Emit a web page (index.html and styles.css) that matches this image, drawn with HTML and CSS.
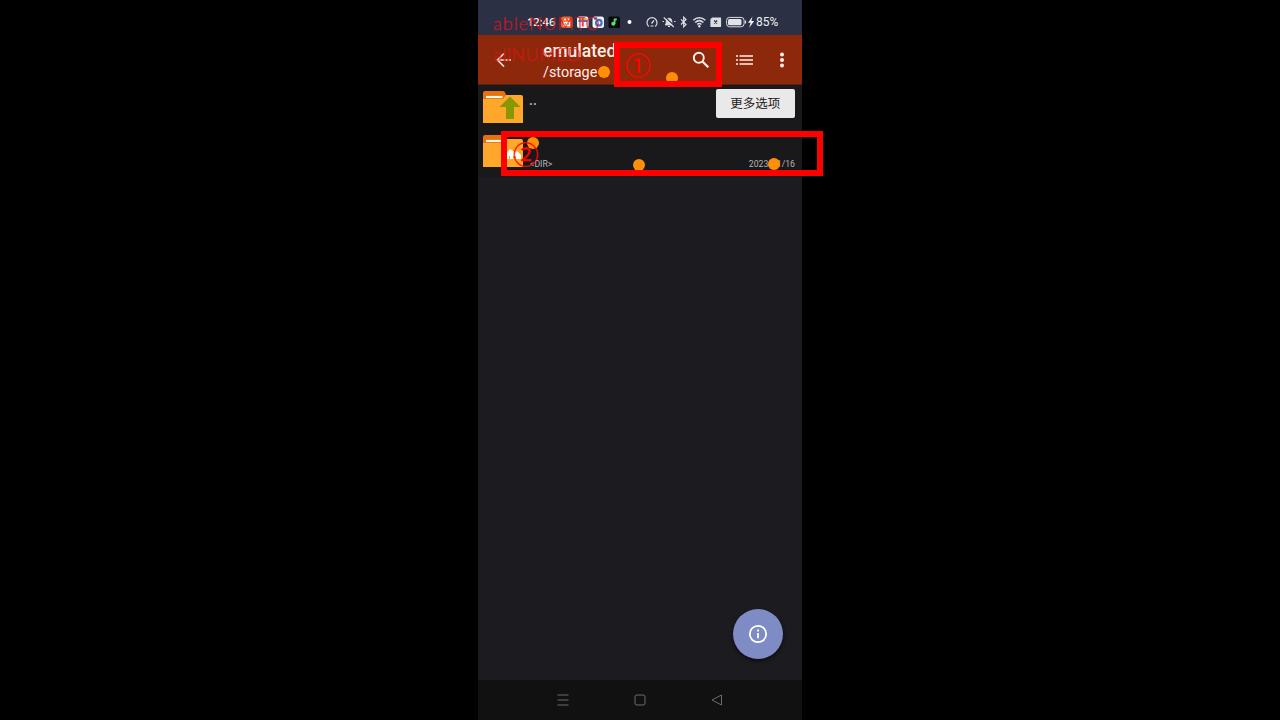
FILE: index.html
```html
<!DOCTYPE html>
<html lang="zh">
<head>
<meta charset="utf-8">
<title>emulated</title>
<link rel="stylesheet" href="styles.css">
</head>
<body>
<div class="phone">
  <header class="status">
    <span class="clock">12:46</span>
    <svg class="apps" width="80" height="14" viewBox="0 0 80 14">
      <rect x="1" y="1.500" width="11.500" height="11.500" rx="2.500" fill="#ed642c"/><path d="M4 4.500h2M8 4.500h2M4 7.500h5.500v3H4zM6 9h2" stroke="#fff" stroke-width="1.300" fill="none"/>
      <rect x="17" y="1.500" width="11.500" height="11.500" rx="2.500" fill="#f2f2f4"/><path d="M19 4h7.500" stroke="#f29235" stroke-width="1.800"/><path d="M18.500 6h8.500" stroke="#477ac5" stroke-width="2"/><path d="M22.800 3v8.500" stroke="#e83845" stroke-width="1.800"/>
      <rect x="32.500" y="1.500" width="11.500" height="11.500" rx="2.500" fill="#f2f2f4"/><circle cx="38.800" cy="7.700" r="2.800" fill="#fff" stroke="#3976c7" stroke-width="2.200"/><path d="M34 4l3-1" stroke="#3976c7" stroke-width="2"/>
      <rect x="48.500" y="1.500" width="11.500" height="11.500" rx="1.500" fill="#050b08"/><circle cx="53.300" cy="8.700" r="2" fill="#55df76"/><path d="M54.600 8.700V4.300h2.200" stroke="#55df76" stroke-width="1.800" fill="none"/>
      <circle cx="69.500" cy="7" r="2" fill="#fff"/>
    </svg>
    <svg class="signals" width="112" height="14" viewBox="0 0 112 14" fill="none" stroke="#dcdde3" stroke-width="1.200">
      <path d="M3.800 11.500a5 5 0 1 1 6.400 0M6.500 8.500l2.500-3M5.500 11h3"/>
      <path d="M20 10h8c-1-1-1.200-2-1.200-4a2.800 2.800 0 0 0-5.600 0c0 2-.2 3-1.200 4z" fill="#dcdde3" stroke="#dcdde3" stroke-width=".8"/><path d="M23 11.500h2M17.500 6.500H19M29 6.500h1.500"/><path d="M20.500 2.500l9 8.500" stroke="#2b3044" stroke-width="1.200"/><path d="M18.800 2.500l10 9.500"/>
      <path d="M36 4.300l5 5.200-2.300 2.300V2.200L41 4.500l-5 5"/>
      <path d="M48.300 5.200c3.400-3.200 8.600-3.200 12 0M50.200 7.500c2.500-2.300 5.700-2.300 8.200 0M52.200 9.500c1.300-1.200 2.900-1.200 4.200 0" stroke-width="1.500"/><circle cx="54.300" cy="11.200" r="1.200" fill="#dcdde3" stroke="none"/>
      <path d="M67.500 3H75.500v8.300H66v-6.800z" fill="#dcdde3" stroke="#dcdde3" stroke-linejoin="round"/><path d="M69.200 5.500l3 3m0-3l-3 3" stroke="#2b3044"/>
      <rect x="81.600" y="2.400" width="17.500" height="9.400" rx="3" stroke-width="1"/><rect x="83" y="3.900" width="13.500" height="6.400" rx="1.500" fill="#e2e3e8" stroke="none"/><path d="M100.500 5.500v3"/>
      <path d="M107.500 1.500l-4.500 6.300h2.600l-1.400 5 5-6.800h-2.800z" fill="#eee" stroke="none"/>
    </svg>
    <span class="battery">85%</span>
  </header>
  <div class="toolbar">
    <svg class="back" width="16" height="16" viewBox="0 0 16 16" fill="none" stroke="#f8e5de" stroke-width="1.700"><path d="M8.500 8H2M9.500 8h2M12.500 8H15M8 1.500L1.500 8 8 14.500"/></svg>
    <div class="titles"><div class="title">emulated</div><div class="path">/storage</div></div>
    <svg class="search" width="18" height="18" viewBox="0 0 18 18" fill="none" stroke="#fff0ea"><circle cx="6.800" cy="6.800" r="5" stroke-width="1.900"/><path d="M10.700 10.700l5.600 5.600" stroke-width="2.200"/></svg>
    <svg class="list" width="18" height="12" viewBox="0 0 18 12" stroke="#fff0ea" stroke-width="1.700"><path d="M0 2h2M3.500 2H17M0 6h2M3.500 6H17M0 10h2M3.500 10H17"/></svg>
    <svg class="more" width="6" height="16" viewBox="0 0 6 16" fill="#fff0ea"><circle cx="3" cy="2.500" r="2"/><circle cx="3" cy="8" r="2"/><circle cx="3" cy="13.500" r="2"/></svg>
  </div>
  <main class="files">
    <div class="row">
      <svg class="folder" width="42" height="34" viewBox="0 0 42 34"><path d="M1 12V3q0-2 2-2h18q2 0 3 4v7z" fill="#e7710d"/><path d="M1 9h20l3-4h15q2 0 2 2v26H1z" fill="#ffa72a"/><path d="M4 7h16.500" stroke="#fff4e6" stroke-width="2.200"/><path d="M28 6.500l10.500 10.500h-6.500v12h-8v-12h-6.500z" fill="#889805"/></svg>
      <span class="parent">..</span>
      <div class="tooltip">更多选项</div>
    </div>
    <div class="row">
      <svg class="folder" width="42" height="34" viewBox="0 0 42 34"><path d="M1 12V3q0-2 2-2h18q2 0 3 4v7z" fill="#e7710d"/><path d="M1 9h20l3-4h15q2 0 2 2v26H1z" fill="#ffa72a"/><path d="M4 7h16.500" stroke="#fff4e6" stroke-width="2.200"/><path d="M24 25l1.500-7 2.500-3 3 2 2 2 2-2 4 4v4h-5v-3h-3v3h-3v-3h-1v3z" fill="#fff"/></svg>
      <span class="dir">&lt;DIR&gt;</span>
      <span class="date">2023/11/16</span>
    </div>
  </main>
  <div class="fab"><svg width="20" height="20" viewBox="0 0 20 20" fill="none" stroke="#fff" stroke-width="1.800"><circle cx="10" cy="10" r="8.200"/><path d="M10 9v5.200M10 5.600v2"/></svg></div>
  <nav class="nav">
    <svg width="14" height="14" viewBox="0 0 14 14"><path d="M1.500 2h11M1.500 7h11M1.500 12h11"/></svg>
    <svg width="14" height="14" viewBox="0 0 14 14"><rect x="2" y="2" width="10" height="10" rx="2"/></svg>
    <svg width="14" height="14" viewBox="0 0 14 14"><path d="M11.500 2v10L2 7z" stroke-linejoin="round"/></svg>
  </nav>
</div>
<div class="watermark mark-top">ableNUMTO</div>
<div class="watermark mark-bottom">allNUMED</div>
<i class="dot dot-path"></i><i class="dot dot-bar"></i><i class="dot dot-name"></i><i class="dot dot-row"></i><i class="dot dot-date"></i>
<div class="box box-one"></div>
<div class="box box-two"></div>
<span class="number number-one">①</span>
<span class="number number-two">②</span>
</body>
</html>
```
FILE: styles.css
```css
* { box-sizing: border-box; }
body { margin: 0; height: 720px; background: #000; overflow: hidden; position: relative; font-family: Roboto, "Noto Sans CJK SC", sans-serif; }
svg { display: block; flex: none; }
.phone { width: 324px; height: 720px; margin: 0 auto; background: #1c1c20; display: flex; flex-direction: column; position: relative; }
.status { height: 35px; background: #2b3044; display: flex; align-items: center; padding: 9px 0 0 49px; color: #f0f0f4; font-size: 12px; white-space: nowrap; }
.clock { width: 33px; font-family: "Open Sans", sans-serif; font-size: 11px; font-weight: 600; line-height: 14px; }
.signals { margin-left: 5px; }
.battery { margin-left: -1px; font-size: 12px; }
.toolbar { height: 50px; background: #8e280a; border-bottom: 1px solid #5c2110; display: flex; align-items: center; color: #ffeee8; }
.back { margin-left: 18px; }
.titles { width: 149px; margin-left: 31px; padding-top: 3px; }
.title { font-size: 17.5px; line-height: 22px; font-weight: 500; }
.path { font-size: 14.4px; line-height: 21px; }
.list { margin-left: 26px; }
.more { margin-left: 25px; }
.files { flex: 1; padding-top: 5px; background: linear-gradient(#19191b 92px, #1c1c20 92px); }
.row { height: 44px; display: flex; align-items: flex-start; padding: 0 7px 0 4px; color: #b5b5b7; }
.parent { font-size: 14px; line-height: 20px; margin-left: 5px; font-weight: 500; }
.tooltip { margin: -1px 0 0 auto; width: 79.500px; height: 29px; border-radius: 2px; background: #e9e9e9; color: #202020; font: 12.500px/28px "Noto Sans CJK SC", sans-serif; text-align: center; }
.dir, .date { font-size: 8.7px; line-height: 12px; margin-top: 24px; }
.dir { margin-left: 6px; }
.date { margin-left: auto; }
.fab { position: absolute; left: 255px; top: 609px; width: 50px; height: 50px; border-radius: 50%; background: #7e8bc5; display: grid; place-items: center; box-shadow: 0 2px 4px #0009; }
.nav { height: 40px; background: #111112; display: flex; align-items: center; justify-content: center; gap: 63px; fill: none; stroke: #6c6c70; stroke-width: 1; }
.watermark { position: absolute; left: 493px; color: #e11218; opacity: .85; font: 300 18px/22px Lato, sans-serif; letter-spacing: 1px; white-space: nowrap; -webkit-text-stroke: .25px #e11218; }
.mark-top { top: 12px; }
.mark-bottom { top: 43px; letter-spacing: .6px; opacity: .75; }
.box { position: absolute; border: 6px solid #f00; }
.box-one { left: 614px; top: 42px; width: 108px; height: 45px; }
.box-two { left: 501px; top: 131px; width: 322px; height: 45px; }
.number { position: absolute; color: #f00; font: 25.5px/30px "Noto Sans CJK SC", sans-serif; -webkit-text-stroke: .3px #f00; }
.number-one { left: 625px; top: 49px; }
.number-two { left: 513px; top: 138px; }
.dot { position: absolute; width: 12px; height: 12px; border-radius: 50%; background: #ff8e08; }
.dot-path { left: 598px; top: 66px; }
.dot-bar { left: 666px; top: 72px; }
.dot-name { left: 527px; top: 137px; }
.dot-row { left: 633px; top: 159px; }
.dot-date { left: 768px; top: 158px; }
```
